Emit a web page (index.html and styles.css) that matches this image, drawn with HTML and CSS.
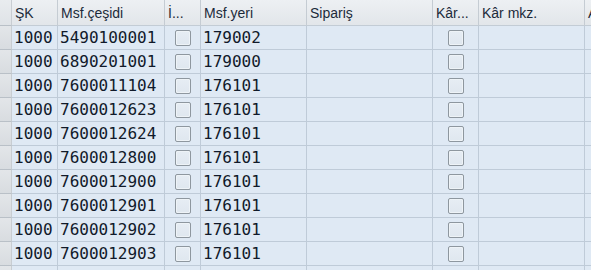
FILE: index.html
```html
<!DOCTYPE html>
<html>
<head>
<meta charset="utf-8">
<link rel="stylesheet" href="styles.css">
</head>
<body>
<div class="grid">
  <div class="hc sel"></div>
  <div class="hc">ŞK</div>
  <div class="hc">Msf.çeşidi</div>
  <div class="hc">İ...</div>
  <div class="hc">Msf.yeri</div>
  <div class="hc">Sipariş</div>
  <div class="hc">Kâr...</div>
  <div class="hc">Kâr mkz.</div>
  <div class="hc">A</div>

  <div class="c sel"></div><div class="c">1000</div><div class="c">5490100001</div><div class="c ck"><span class="box"></span></div><div class="c">179002</div><div class="c"></div><div class="c ck"><span class="box"></span></div><div class="c"></div><div class="c"></div>
  <div class="c sel"></div><div class="c">1000</div><div class="c">6890201001</div><div class="c ck"><span class="box"></span></div><div class="c">179000</div><div class="c"></div><div class="c ck"><span class="box"></span></div><div class="c"></div><div class="c"></div>
  <div class="c sel"></div><div class="c">1000</div><div class="c">7600011104</div><div class="c ck"><span class="box"></span></div><div class="c">176101</div><div class="c"></div><div class="c ck"><span class="box"></span></div><div class="c"></div><div class="c"></div>
  <div class="c sel"></div><div class="c">1000</div><div class="c">7600012623</div><div class="c ck"><span class="box"></span></div><div class="c">176101</div><div class="c"></div><div class="c ck"><span class="box"></span></div><div class="c"></div><div class="c"></div>
  <div class="c sel"></div><div class="c">1000</div><div class="c">7600012624</div><div class="c ck"><span class="box"></span></div><div class="c">176101</div><div class="c"></div><div class="c ck"><span class="box"></span></div><div class="c"></div><div class="c"></div>
  <div class="c sel"></div><div class="c">1000</div><div class="c">7600012800</div><div class="c ck"><span class="box"></span></div><div class="c">176101</div><div class="c"></div><div class="c ck"><span class="box"></span></div><div class="c"></div><div class="c"></div>
  <div class="c sel"></div><div class="c">1000</div><div class="c">7600012900</div><div class="c ck"><span class="box"></span></div><div class="c">176101</div><div class="c"></div><div class="c ck"><span class="box"></span></div><div class="c"></div><div class="c"></div>
  <div class="c sel"></div><div class="c">1000</div><div class="c">7600012901</div><div class="c ck"><span class="box"></span></div><div class="c">176101</div><div class="c"></div><div class="c ck"><span class="box"></span></div><div class="c"></div><div class="c"></div>
  <div class="c sel"></div><div class="c">1000</div><div class="c">7600012902</div><div class="c ck"><span class="box"></span></div><div class="c">176101</div><div class="c"></div><div class="c ck"><span class="box"></span></div><div class="c"></div><div class="c"></div>
  <div class="c sel"></div><div class="c">1000</div><div class="c">7600012903</div><div class="c ck"><span class="box"></span></div><div class="c">176101</div><div class="c"></div><div class="c ck"><span class="box"></span></div><div class="c"></div><div class="c"></div>
  <div class="c sel"></div><div class="c"></div><div class="c"></div><div class="c"></div><div class="c"></div><div class="c"></div><div class="c"></div><div class="c"></div><div class="c"></div>
</div>
</body>
</html>
```

FILE: styles.css
```css
html, body {
  margin: 0;
  padding: 0;
  background: #dfe9f4;
  overflow: hidden;
}
.grid {
  display: grid;
  grid-template-columns: 12px 46px 107px 36px 106px 126px 46px 106px 100px;
  grid-template-rows: 26px;
  grid-auto-rows: 24px;
  width: 591px;
  height: 270px;
  overflow: hidden;
}
.hc {
  box-sizing: border-box;
  background: linear-gradient(#edf0f3, #e2e6ea);
  border-right: 1px solid #c5ccd3;
  border-bottom: 1px solid #c3ccd5;
  font-family: "Liberation Sans", Arial, sans-serif;
  font-size: 14px;
  color: #1c2a3a;
  padding: 5px 0 0 3px;
  line-height: 16px;
  white-space: nowrap;
  overflow: hidden;
}
.c {
  box-sizing: border-box;
  background: #dfe9f4;
  border-right: 1px solid #bfcbd8;
  border-bottom: 1px solid #bfcbd8;
  font-family: "DejaVu Sans Mono", monospace;
  font-size: 16px;
  color: #111a2a;
  padding: 2px 0 0 2px;
  white-space: nowrap;
  overflow: hidden;
  line-height: 20px;
}
.sel {
  background: linear-gradient(#e3e6e9, #d8dce0);
  border-right: 1px solid #c8cdd2;
  border-bottom: 1px solid #b9c0c7;
  padding: 0;
}
.hc.sel {
  background: linear-gradient(#e9ecef, #dfe3e7);
}
.ck {
  display: flex;
  justify-content: center;
  align-items: center;
  padding: 0;
}
.box {
  display: block;
  box-sizing: border-box;
  width: 16px;
  height: 16px;
  border: 1px solid #8e979f;
  border-radius: 2px;
  background: linear-gradient(#e6edf4, #dfe7ef);
  box-shadow: inset 0 0 0 1px #eef3f7;
}
```
